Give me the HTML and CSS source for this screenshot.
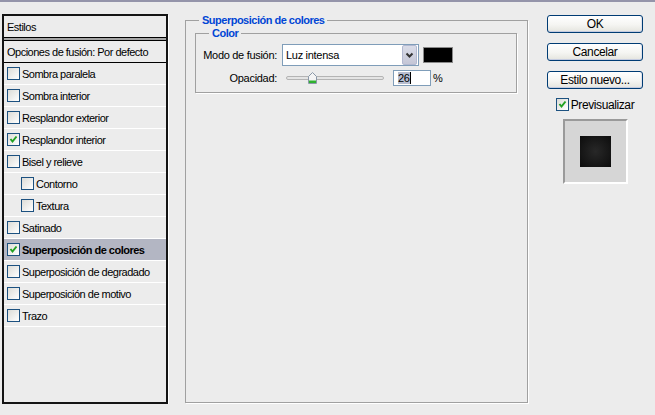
FILE: index.html
```html
<!DOCTYPE html>
<html lang="es">

<head>
    <meta charset="UTF-8">
    <meta name="viewport" content="width=device-width, initial-scale=1.0">
    <title>Estilo de capa</title>
    <link rel="stylesheet" href="styles.css">
</head>

<body>
    <div class="dialog">

        <!-- lista de efectos -->
        <div class="styles-list">
            <div class="list-head">Estilos</div>
            <div class="list-rule"></div>
            <div class="list-default">Opciones de fusión: Por defecto</div>

            <div class="style-row"><span class="check"></span>Sombra paralela</div>
            <div class="style-row"><span class="check"></span>Sombra interior</div>
            <div class="style-row"><span class="check"></span>Resplandor exterior</div>
            <div class="style-row">
                <span class="check"><svg width="11" height="11" viewBox="0 0 11 11"><path d="M2.5 5 L4.5 7.5 L8.5 2.5" /></svg></span>Resplandor interior
            </div>
            <div class="style-row"><span class="check"></span>Bisel y relieve</div>
            <div class="style-row sub"><span class="check"></span>Contorno</div>
            <div class="style-row sub"><span class="check"></span>Textura</div>
            <div class="style-row"><span class="check"></span>Satinado</div>
            <div class="style-row selected">
                <span class="check"><svg width="11" height="11" viewBox="0 0 11 11"><path d="M2.5 5 L4.5 7.5 L8.5 2.5" /></svg></span>Superposición de colores
            </div>
            <div class="style-row"><span class="check"></span>Superposición de degradado</div>
            <div class="style-row"><span class="check"></span>Superposición de motivo</div>
            <div class="style-row"><span class="check"></span>Trazo</div>
        </div>

        <!-- panel del efecto activo -->
        <fieldset class="group blend">
            <legend>Superposición de colores</legend>
            <fieldset class="group color-box">
                <legend>Color</legend>
                <div class="color-grid">
                    <label class="field-label">Modo de fusión:</label>
                    <div class="field-row">
                        <div class="blend-select">
                            <span>Luz intensa</span>
                            <span class="select-arrow">
                                <svg width="13" height="18" viewBox="0 0 13 18"><path d="M3.5 7.5 L6.5 10.5 L9.5 7.5" /></svg>
                            </span>
                        </div>
                        <span class="swatch"></span>
                    </div>

                    <label class="field-label">Opacidad:</label>
                    <div class="field-row">
                        <div class="slider">
                            <span class="track"></span>
                            <svg class="thumb" width="9" height="12" viewBox="0 0 9 12">
                                <path d="M0.5 4.5 L4.5 0.5 L8.5 4.5 L8.5 11.5 L0.5 11.5 Z" fill="#f4f4f4" stroke="#8a98a8" />
                                <rect x="1" y="8.5" width="7" height="2.5" fill="#2fb22f" />
                            </svg>
                        </div>
                        <div class="opacity-input"><span class="sel">26</span><span class="caret"></span></div>
                        <span class="unit">%</span>
                    </div>
                </div>
            </fieldset>
        </fieldset>

        <!-- botones -->
        <div class="actions">
            <button class="btn">OK</button>
            <button class="btn">Cancelar</button>
            <button class="btn">Estilo nuevo...</button>
            <div class="preview-toggle">
                <span class="check"><svg width="11" height="11" viewBox="0 0 11 11"><path d="M2.5 5 L4.5 7.5 L8.5 2.5" /></svg></span>Previsualizar
            </div>
            <div class="preview">
                <div class="preview-square"></div>
            </div>
        </div>

    </div>
</body>

</html>
```

FILE: styles.css
```css
body {
    margin: 0;
    background-color: #ececec;
    border-top: 2px solid #9494aa;
    font-family: "Liberation Sans", Arial, sans-serif;
    font-size: 11px;
    color: #000;
}

.dialog {
    display: flex;
    align-items: flex-start;
    padding: 12px 0 0 2px;
}

/* ---- lista de estilos ---- */

.styles-list {
    width: 166px;
    height: 390px;
    box-sizing: border-box;
    border: 2px solid #141414;
    box-shadow: 1px 1px 0 #fff;
    letter-spacing: -0.5px;
}

.list-head,
.list-default,
.style-row {
    height: 21px;
    display: flex;
    align-items: center;
    padding-left: 3px;
}

.list-rule {
    height: 2px;
    background-color: #a4a4a4;
    border-top: 1px solid #000;
    border-bottom: 1px solid #000;
}

.list-default {
    border-bottom: 1px solid #000;
}

.style-row {
    border-bottom: 1px solid #fff;
    gap: 2px;
}

.style-row.sub {
    padding-left: 17px;
}

.style-row.selected {
    background-color: #b3b6c3;
    font-weight: bold;
}

.check {
    flex: none;
    width: 13px;
    height: 13px;
    box-sizing: border-box;
    border: 1px solid #1c5180;
    background: linear-gradient(135deg, #dcdcd7, #fff);
    display: flex;
}

.check path {
    fill: none;
    stroke: #21a121;
    stroke-width: 2;
}

/* ---- grupos ---- */

.group {
    margin: 0;
    min-width: 0;
    border: 1px solid #a0a0a0;
    box-shadow: 1px 1px 0 #fff;
}

.group legend {
    padding: 0 3px;
    line-height: 13px;
    font-weight: bold;
    color: #0046d5;
    letter-spacing: -0.5px;
}

.blend {
    width: 343px;
    height: 389px;
    box-sizing: border-box;
    margin-left: 17px;
    padding: 0 10px 0 9px;
}

.blend > legend {
    margin-left: 4px;
}

.color-box {
    padding: 4px 0 6px 0;
}

.color-box > legend {
    margin-left: 13px;
}

.color-grid {
    display: grid;
    grid-template-columns: 81px auto;
    column-gap: 5px;
    row-gap: 4px;
    align-items: center;
    letter-spacing: -0.3px;
}

.field-label {
    text-align: right;
}

.field-row {
    display: flex;
    align-items: center;
}

.blend-select {
    width: 137px;
    height: 22px;
    box-sizing: border-box;
    border: 1px solid #7f9db9;
    background-color: #fff;
    display: flex;
    align-items: center;
    padding-left: 3px;
}

.select-arrow {
    margin-left: auto;
    margin-right: 1px;
    width: 15px;
    height: 20px;
    box-sizing: border-box;
    border: 1px solid #b2b8d0;
    border-radius: 2px;
    background: linear-gradient(#dadce8, #c4c6d6);
    display: flex;
}

.select-arrow path {
    fill: none;
    stroke: #333;
    stroke-width: 2;
}

.swatch {
    margin-left: 4px;
    width: 30px;
    height: 16px;
    box-sizing: border-box;
    border: 1px solid #8a8a8a;
    background-color: #000;
}

.slider {
    position: relative;
    width: 98px;
    height: 16px;
    margin-left: 4px;
}

.track {
    position: absolute;
    left: 0;
    right: 0;
    top: 6px;
    height: 4px;
    box-sizing: border-box;
    border: 1px solid #b4b4b4;
    border-radius: 2px;
    background-color: #e4e4e4;
}

.thumb {
    position: absolute;
    left: 22px;
    top: 2px;
}

.opacity-input {
    margin-left: 9px;
    width: 38px;
    height: 16px;
    box-sizing: border-box;
    border: 1px solid #7f9db9;
    background-color: #fff;
    display: flex;
    align-items: center;
    padding-left: 4px;
}

.opacity-input .sel {
    background-color: #b6bdd0;
    line-height: 12px;
}

.opacity-input .caret {
    width: 1px;
    height: 12px;
    background-color: #000;
}

.unit {
    margin-left: 2px;
}

/* ---- botones y vista previa ---- */

.actions {
    margin-left: 19px;
    width: 96px;
    padding-top: 1px;
    display: flex;
    flex-direction: column;
    align-items: center;
}

.btn {
    width: 96px;
    height: 18px;
    margin: 0 0 10px 0;
    padding: 0;
    box-sizing: border-box;
    border: 1px solid #003c74;
    border-radius: 3px;
    background: linear-gradient(#fff, #f5f5f2 55%, #e4e4de);
    box-shadow: inset 0 -1px 0 #c4cbe0, inset -1px 0 0 #dfe2ec;
    font-family: "Liberation Sans", Arial, sans-serif;
    font-size: 12px;
    letter-spacing: -0.4px;
    line-height: 15px;
    color: #000;
}

.preview-toggle {
    margin-top: -2px;
    height: 15px;
    display: flex;
    align-items: center;
    gap: 2px;
    font-size: 12px;
    letter-spacing: -0.4px;
}

.preview {
    margin-top: 7px;
    width: 65px;
    height: 65px;
    box-sizing: border-box;
    border-top: 2px solid #9a9a9a;
    border-left: 2px solid #9a9a9a;
    border-right: 2px solid #fff;
    border-bottom: 2px solid #fff;
    background-color: #d6d6d6;
    display: flex;
    align-items: center;
    justify-content: center;
}

.preview-square {
    width: 31px;
    height: 31px;
    background: radial-gradient(#282828, #0c0c0c);
}
```
